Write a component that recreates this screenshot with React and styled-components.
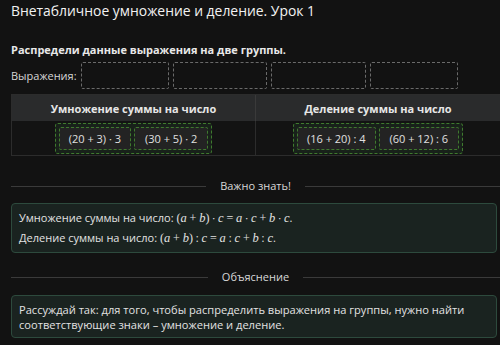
import React from "react";
import styled, { createGlobalStyle } from "styled-components";

const Global = createGlobalStyle`
  html, body { margin: 0; padding: 0; background: #121212; }
  body { font-family: "Open Sans", "Noto Sans", sans-serif; color: #e4e4e4; }
  * { box-sizing: border-box; }
`;

const Page = styled.div`
  width: 500px;
  height: 345px;
  overflow: hidden;
  padding: 1px 2px 0 11px;
`;

const Title = styled.h1`
  margin: 0;
  font-size: 13.9px;
  font-weight: 400;
  line-height: 20px;
  color: #f2f2f2;
`;

const Task = styled.p`
  margin: 21px 0 0;
  font-size: 11px;
  font-weight: 700;
  line-height: 16px;
  color: #e8e8e8;
`;

const ExprRow = styled.div`
  display: flex;
  align-items: center;
  gap: 4px;
  margin-top: 4px;
`;

const Label = styled.span`
  font-size: 11px;
  color: #d6d6d6;
  width: 66px;
`;

const Slot = styled.div`
  width: ${(p) => p.$w}px;
  height: 27px;
  border: 1px dashed #6a6a6a;
  border-radius: 2px;
`;

const Table = styled.div`
  margin-top: 5px;
  display: grid;
  grid-template-columns: 243px 1fr;
  border: 1px solid #2c2c2c;
  border-right: none;
  width: 489px;
`;

const Head = styled.div`
  height: 26px;
  background: #2a2b2c;
  display: flex;
  align-items: center;
  justify-content: center;
  font-size: 11px;
  font-weight: 700;
  color: #e6e6e6;
  border-left: ${(p) => (p.$sep ? "1px solid #3a3a3a" : "none")};
`;

const Cell = styled.div`
  height: 34px;
  display: flex;
  align-items: center;
  justify-content: center;
  background: #131313;
  border-left: ${(p) => (p.$sep ? "1px solid #2c2c2c" : "none")};
`;

const Group = styled.div`
  display: flex;
  gap: 3px;
  padding: 3px;
  border: 1px dashed #3f7a2e;
  border-radius: 3px;
  background: #18211a;
`;

const Chip = styled.div`
  height: 23px;
  padding: 0 ${(p) => p.$px || 8}px;
  display: flex;
  align-items: center;
  font-size: 11px;
  color: #e0e0e0;
  background: #232323;
  border: 1px dashed #3f7a2e;
  border-radius: 2px;
`;

const Divider = styled.div`
  display: flex;
  align-items: center;
  gap: 14px;
  margin-top: ${(p) => p.$mt}px;
  width: 489px;
  font-size: 11px;
  line-height: 16px;
  color: #d8d8d8;
  &::before, &::after {
    content: "";
    flex: 1;
    height: 1px;
    background: #3a3a3a;
  }
`;

const Note = styled.div`
  margin-top: ${(p) => p.$mt}px;
  width: 486px;
  border: 1px solid #2d4a3d;
  border-radius: 4px;
  background: #1a2320;
  padding: ${(p) => p.$pad};
  font-size: ${(p) => p.$fs}px;
  line-height: ${(p) => p.$lh}px;
  color: #e2e2e2;
`;

const V = styled.i`
  font-family: "Liberation Serif", "DejaVu Serif", serif;
  font-size: 12.5px;
  font-style: italic;
`;

const Op = styled.span`
  font-family: "Liberation Serif", serif;
  font-size: 12px;
`;

export default function App() {
  return (
    <>
      <Global />
      <Page>
        <Title>Внетабличное умножение и деление. Урок 1</Title>
        <Task>Распредели данные выражения на две группы.</Task>
        <ExprRow>
          <Label>Выражения:</Label>
          <Slot $w={88} />
          <Slot $w={94} />
          <Slot $w={95} />
          <Slot $w={88} />
        </ExprRow>
        <Table>
          <Head>Умножение суммы на число</Head>
          <Head $sep>Деление суммы на число</Head>
          <Cell>
            <Group>
              <Chip $px={9}>(20 + 3) · 3</Chip>
              <Chip $px={10}>(30 + 5) · 2</Chip>
            </Group>
          </Cell>
          <Cell $sep>
            <Group>
              <Chip $px={9}>(16 + 20) : 4</Chip>
              <Chip $px={10}>(60 + 12) : 6</Chip>
            </Group>
          </Cell>
        </Table>
        <Divider $mt={22}>Важно знать!</Divider>
        <Note $mt={9} $pad="4px 7px 4px" $lh={20} $fs={11}>
          <div>
            Умножение суммы на число: <Op>(</Op><V>a</V> <Op>+</Op> <V>b</V><Op>)</Op> · <V>c</V> <Op>=</Op> <V>a</V> · <V>c</V> <Op>+</Op> <V>b</V> · <V>c</V>.
          </div>
          <div>
            Деление суммы на число: <Op>(</Op><V>a</V> <Op>+</Op> <V>b</V><Op>)</Op> : <V>c</V> <Op>=</Op> <V>a</V> : <V>c</V> <Op>+</Op> <V>b</V> : <V>c</V>.
          </div>
        </Note>
        <Divider $mt={16}>Объяснение</Divider>
        <Note $mt={10} $pad="6px 7px 5px" $lh={15} $fs={11.1}>
          Рассуждай так: для того, чтобы распределить выражения на группы, нужно найти соответствующие знаки – умножение и деление.
        </Note>
      </Page>
    </>
  );
}
